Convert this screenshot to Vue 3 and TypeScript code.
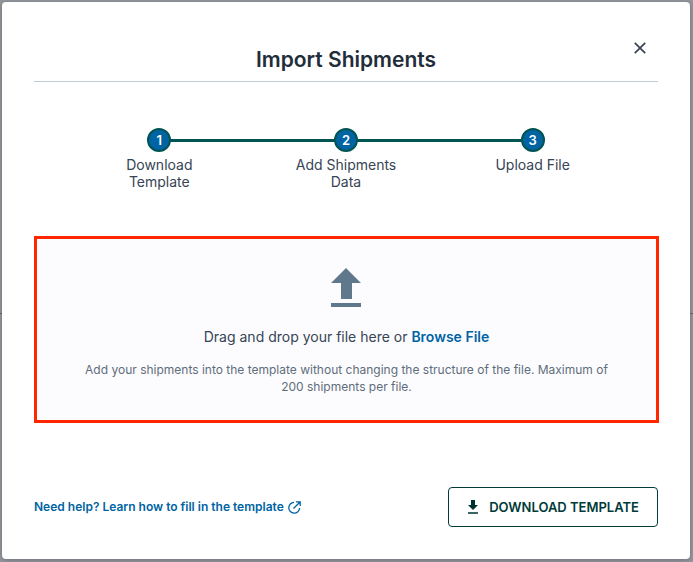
<script setup lang="ts">
import { ref } from 'vue'

interface Step {
  number: number
  label: string
}

const steps: Step[] = [
  { number: 1, label: 'Download Template' },
  { number: 2, label: 'Add Shipments Data' },
  { number: 3, label: 'Upload File' },
]

const open = ref(true)
const fileInput = ref<HTMLInputElement | null>(null)

function browse(): void {
  fileInput.value?.click()
}
</script>

<template>
  <div class="backdrop">
    <section v-if="open" class="dialog" role="dialog" aria-modal="true" aria-labelledby="dialog-title">
      <header class="header">
        <h1 id="dialog-title" class="title">Import Shipments</h1>
        <button class="close" type="button" aria-label="Close" @click="open = false">
          <svg width="12" height="12" viewBox="0 0 12 12" aria-hidden="true">
            <path d="M.8 .8L11.200 11.200M11.200 .8L.8 11.200" fill="none" stroke="#3b4757" stroke-width="1.800" />
          </svg>
        </button>
      </header>

      <ol class="steps">
        <li v-for="step in steps" :key="step.number" class="step">
          <span class="badge">{{ step.number }}</span>
          <span class="label">{{ step.label }}</span>
        </li>
      </ol>

      <div class="dropzone" @dragover.prevent @drop.prevent>
        <svg class="upload" width="32" height="40" viewBox="0 0 32 40" aria-hidden="true">
          <path d="M15 1L30 16H21V32H10V16H0ZM0 36H30V40H0Z" fill="#60788c" />
        </svg>
        <p class="prompt">
          Drag and drop your file here or
          <button class="browse" type="button" @click="browse">Browse File</button>
        </p>
        <input ref="fileInput" type="file" hidden aria-label="Shipments file" />
        <p class="hint">
          Add your shipments into the template without changing the structure of the file. Maximum of 200 shipments per file.
        </p>
      </div>

      <footer class="footer">
        <a class="help" href="#">
          Need help? Learn how to fill in the template
          <svg width="13" height="13" viewBox="0 0 13 13" aria-hidden="true">
            <path d="M6 1.300A5.400 5.400 0 1 0 11.600 7M8 .8H12.200V5M12 1L5.500 7.500" fill="none" stroke="#0063a3" stroke-width="1.300" />
          </svg>
        </a>
        <button class="download" type="button">
          <svg width="10" height="14" viewBox="0 0 10 14" aria-hidden="true">
            <path d="M3 0H7V5H10L5 10L0 5H3Z" fill="#00332f" />
            <path d="M0 12H10V14H0Z" fill="#3c6563" />
          </svg>
          DOWNLOAD TEMPLATE
        </button>
      </footer>
    </section>
  </div>
</template>

<style>
body {
  background: #94979c;
}
</style>

<style scoped>
.backdrop {
  box-sizing: border-box;
  min-height: 100vh;
  padding: 2px 3px 3px 2px;
  background: linear-gradient(#62656b, #62656b) 0 313px / 100% 1px no-repeat, #94979c;
  font-family: Inter, "Liberation Sans", sans-serif;
  color: #374453;
}

.dialog {
  box-sizing: border-box;
  padding: 40px 32px 32px;
  border-radius: 4px;
  background: #fff;
  box-shadow: 0 1px 5px rgba(50, 54, 62, 0.4);
}

.header {
  display: grid;
  grid-template-columns: 36px 1fr 36px;
  align-items: start;
  height: 39px;
  border-bottom: 1px solid #c3cad0;
}

.title {
  grid-column: 2;
  margin: 0;
  padding-top: 4px;
  font-size: 21px;
  line-height: 28px;
  font-weight: 600;
  text-align: center;
  color: #222d3a;
}

.close {
  display: flex;
  justify-content: center;
  padding: 0;
  border: 0;
  background: none;
  cursor: pointer;
}

.steps {
  display: grid;
  grid-template-columns: repeat(3, 1fr);
  margin: 46px 0 0;
  padding: 0 32px;
  list-style: none;
}

.step {
  position: relative;
  display: flex;
  flex-direction: column;
  align-items: center;
  gap: 4px;
}

.step + .step::before {
  content: "";
  position: absolute;
  top: 11px;
  left: -50%;
  width: 100%;
  height: 3px;
  background: #005552;
}

.step:nth-child(2) {
  z-index: 1;
}

.step:first-child {
  z-index: 2;
}

.badge {
  position: relative;
  box-sizing: border-box;
  width: 24px;
  height: 24px;
  border: 2px solid #005552;
  border-radius: 50%;
  background: #0063a3;
  color: #fff;
  font-size: 13px;
  line-height: 20px;
  font-weight: 600;
  text-align: center;
}

.label {
  max-width: 112px;
  font-size: 14px;
  line-height: 17px;
  text-align: center;
}

.dropzone {
  box-sizing: border-box;
  display: flex;
  flex-direction: column;
  align-items: center;
  margin: 46px -1px 0 0;
  padding: 28px 47px 25px;
  border: 3px solid #ff2600;
  background: #fcfcff;
  text-align: center;
}

.prompt {
  margin: 20px 0 0;
  font-size: 14px;
  line-height: 20px;
}

.browse {
  padding: 0;
  border: 0;
  background: none;
  color: #0063a3;
  font: inherit;
  font-weight: 600;
  cursor: pointer;
}

.hint {
  margin: 14px 0 0;
  font-size: 12px;
  line-height: 17px;
  color: #5f6d7a;
}

.footer {
  display: flex;
  align-items: center;
  justify-content: space-between;
  gap: 16px;
  margin-top: 64px;
}

.help {
  display: flex;
  align-items: center;
  gap: 4px;
  color: #0063a3;
  font-size: 12px;
  line-height: 18px;
  font-weight: 600;
  text-decoration: none;
}

.download {
  display: flex;
  align-items: center;
  gap: 11px;
  height: 40px;
  padding: 0 18px 0 19px;
  border: 1px solid #003b39;
  border-radius: 4px;
  background: #fff;
  color: #003b39;
  font: inherit;
  font-size: 13px;
  font-weight: 600;
  white-space: nowrap;
  cursor: pointer;
}
</style>
